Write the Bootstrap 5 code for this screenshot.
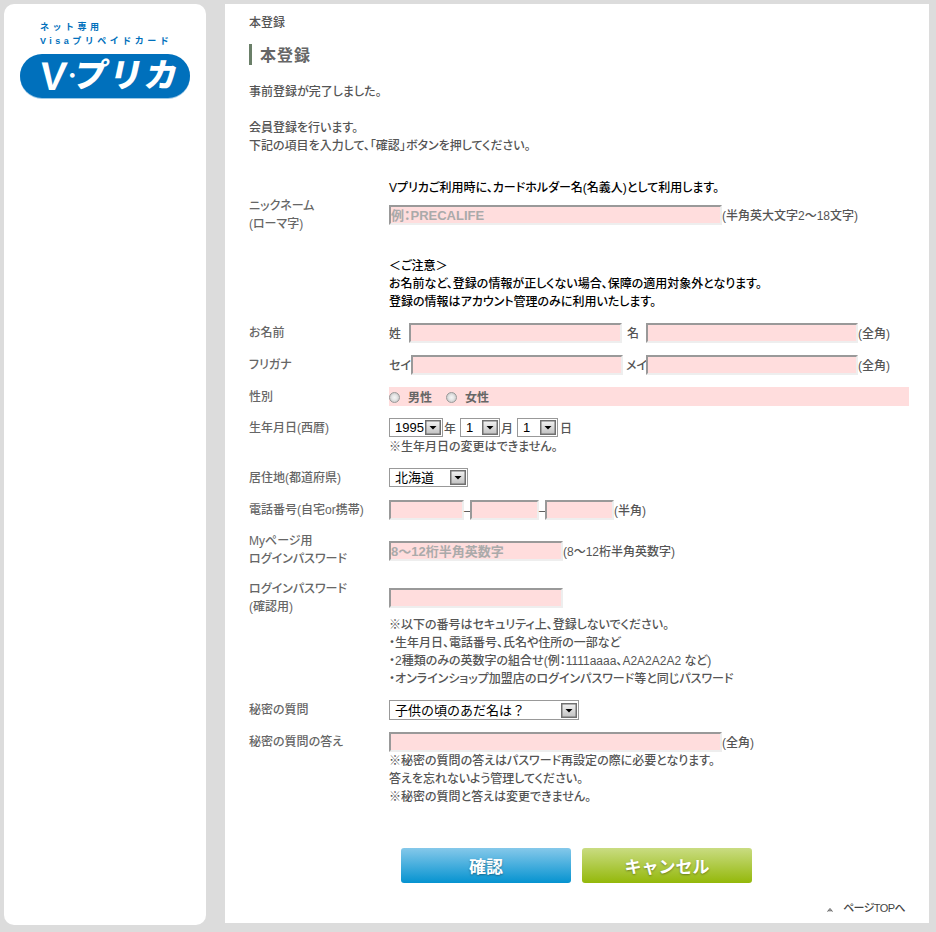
<!DOCTYPE html>
<html lang="ja">
<head>
<meta charset="utf-8">
<title>本登録</title>
<link rel="stylesheet" href="https://cdn.jsdelivr.net/npm/bootstrap@5.3.0/dist/css/bootstrap.min.css">
<style>
html,body{height:932px;overflow:hidden}
body{background:#dcdcdc;font-family:"Liberation Sans","Noto Sans CJK JP",sans-serif;font-size:12px;line-height:18px;color:#555;font-feature-settings:"palt";font-weight:500}
.vp-page{padding:4px 0 0 4px;gap:19px}
.vp-side{width:202px;height:921px;background:#fff;border-radius:10px;flex:none}
.vp-tag{padding:16px 0 0 36px;color:#0070bc;font-weight:700;font-size:9px;line-height:14px;letter-spacing:3.5px;font-feature-settings:normal}
.vp-pill{margin:6px 0 0 16px;width:170px;height:44px;border-radius:22px;background:#0070bc;color:#fff;box-shadow:0 1px 0 #9cc8e6;padding-left:20px;overflow:hidden;font-feature-settings:normal}
.vp-pill b{display:block;font-weight:900;white-space:nowrap}
.vp-v{font-size:40px;line-height:44px;transform:skewX(-6deg)}
.vp-kana{font-size:33px;line-height:44px;letter-spacing:2.5px;transform:skewX(-12deg);margin-left:-4px}
.vp-dot{font-size:22px}
.vp-main{width:704px;height:919px;background:#fff;flex:none;padding:10px 20px 0 24px;position:relative}
.vp-crumb{line-height:18px}
.vp-h1{margin:12px 0 0 0;border-left:3px solid #6a7f68;padding-left:8px;height:21px;font-size:16px;letter-spacing:1px;line-height:24px;font-weight:700;color:#666;font-feature-settings:normal}
.vp-p{margin:18px 0 0 0}
.vp-gap{margin-top:18px}
.vp-form{margin-top:23px}
.vp-row{display:flex}
.vp-lab{width:140px;flex:none;color:#666}
.vp-ctl{flex:1 1 auto;min-width:0}
.vp-black{color:#000}
.vp-txt{padding-top:1px;margin-bottom:-1px}
.vp-field{display:flex;align-items:center;height:20px}
.vp-field span{padding-top:2px}
.vp-sp9{padding-top:9px}
.vp-sp10{padding-top:10px}
.form-control.vp-in{display:block;flex:none;height:20px;padding:0;border-radius:0;border-width:2px;border-style:solid;border-color:#999 #eee #eee #999;background:#fdd;font-size:13px;line-height:16px;box-shadow:none;font-family:"Liberation Sans","Noto Sans CJK JP",sans-serif;font-weight:700;font-feature-settings:"palt"}
.form-control.vp-in::placeholder{color:#aaa;opacity:1}
.vp-w333{width:333px}.vp-w213{width:213px}.vp-w212{width:212px}.vp-w75{width:75px}.vp-w69{width:69px}.vp-w174{width:174px}
.form-select.vp-sel{flex:none;height:19px;padding:0 0 0 5px;border-radius:0;border:1px solid #999;background-color:#fff;background-size:16px 15px;background-position:right 1px center;background-repeat:no-repeat;background-image:url("data:image/svg+xml,%3Csvg xmlns='http://www.w3.org/2000/svg' viewBox='0 0 16 15' preserveAspectRatio='none'%3E%3Cdefs%3E%3ClinearGradient id='g' x2='0' y2='1'%3E%3Cstop offset='0' stop-color='%23f0f0f0'/%3E%3Cstop offset='1' stop-color='%23c4c4c4'/%3E%3C/linearGradient%3E%3C/defs%3E%3Crect width='16' height='15' fill='%23707070'/%3E%3Crect x='1.5' y='1.5' width='13' height='12' fill='url(%23g)'/%3E%3Cpath d='M4.5 6h7L8 9.5z' fill='%23000'/%3E%3C/svg%3E");font-size:13px;line-height:17px;color:#000;box-shadow:none;font-family:"Liberation Sans","Noto Sans CJK JP",sans-serif;font-feature-settings:normal}
.vp-sel-tall.form-select{height:20px}
.vp-band{background:#fdd;height:19px;width:520px;color:#666;font-weight:700;padding-top:2px}
.form-check-input.vp-radio{width:11px;height:11px;margin:0;flex:none;border:1px solid #999;background:radial-gradient(circle at 50% 50%,#f4f4f4 0,#e8e8e8 35%,#bbb 100%);box-shadow:none}
.vp-t8{margin-left:8px}
.vp-r14{margin-right:14px}
.vp-unit{width:17px;padding-left:1px}
.vp-dash{width:6px;text-align:center}
.vp-btns{margin:43px 0 0 152px;gap:11px}
.btn.vp-btn{width:170px;height:35px;padding:0;border:0;border-radius:3px;color:#fff;font-size:17px;line-height:34px;font-weight:700;text-shadow:0 1px 2px rgba(0,0,0,.35);font-family:"Noto Sans CJK JP",sans-serif;font-feature-settings:normal}
.vp-blue{background:linear-gradient(#85c8ea,#0593d0)}
.vp-green{background:linear-gradient(#c9dc82,#94b80a)}
.vp-top{position:absolute;right:24px;top:895px;gap:10px;color:#444;text-decoration:none;font-size:11px;letter-spacing:-.6px}
.vp-top svg{display:block;margin-top:3px}
</style>
</head>
<body>
<div class="d-flex vp-page">
  <aside class="vp-side">
    <div class="vp-tag">ネット専用<br>Visaプリペイドカード</div>
    <div class="vp-pill d-flex align-items-center"><b class="vp-v">V</b><b class="vp-dot">･</b><b class="vp-kana">プリカ</b></div>
  </aside>
  <main class="vp-main">
    <div class="vp-crumb">本登録</div>
    <h1 class="vp-h1">本登録</h1>
    <p class="vp-p mb-0">事前登録が完了しました。</p>
    <p class="vp-gap mb-0">会員登録を行います。<br>下記の項目を入力して、「確認」ボタンを押してください。</p>
    <form class="vp-form">
      <div class="vp-row">
        <div class="vp-lab"></div>
        <div class="vp-ctl vp-black vp-txt">Vプリカご利用時に、カードホルダー名(名義人)として利用します。</div>
      </div>
      <div class="vp-row">
        <div class="vp-lab vp-txt">ニックネーム<br>(ローマ字)</div>
        <div class="vp-ctl vp-sp9"><div class="vp-field"><input class="form-control vp-in vp-w333" placeholder="例：PRECALIFE"><span>(半角英大文字2～18文字)</span></div></div>
      </div>
      <div class="vp-row" style="margin-top:24px">
        <div class="vp-lab"></div>
        <div class="vp-ctl vp-black vp-txt">＜ご注意＞<br>お名前など、登録の情報が正しくない場合、保障の適用対象外となります。<br>登録の情報はアカウント管理のみに利用いたします。</div>
      </div>
      <div class="vp-row" style="margin-top:13px">
        <div class="vp-lab vp-txt">お名前</div>
        <div class="vp-ctl"><div class="vp-field"><span style="width:20px">姓</span><input class="form-control vp-in vp-w213"><span style="width:24px;padding-left:5px">名</span><input class="form-control vp-in vp-w212"><span>(全角)</span></div></div>
      </div>
      <div class="vp-row" style="margin-top:12px">
        <div class="vp-lab vp-txt">フリガナ</div>
        <div class="vp-ctl"><div class="vp-field"><span style="width:22px">セイ</span><input class="form-control vp-in vp-w212"><span style="width:23px;padding-left:3px;white-space:nowrap">メイ</span><input class="form-control vp-in vp-w212"><span>(全角)</span></div></div>
      </div>
      <div class="vp-row" style="margin-top:12px">
        <div class="vp-lab vp-txt">性別</div>
        <div class="vp-ctl"><div class="vp-band d-flex align-items-center"><input type="radio" class="form-check-input vp-radio" name="sx"><span class="vp-t8 vp-r14">男性</span><input type="radio" class="form-check-input vp-radio" name="sx"><span class="vp-t8">女性</span></div></div>
      </div>
      <div class="vp-row" style="margin-top:12px">
        <div class="vp-lab vp-txt">生年月日(西暦)</div>
        <div class="vp-ctl">
          <div class="vp-field" style="height:19px"><select class="form-select vp-sel" style="width:54px"><option>1995</option></select><span class="vp-unit">年</span><select class="form-select vp-sel" style="width:40px"><option>1</option></select><span class="vp-unit">月</span><select class="form-select vp-sel" style="width:41px"><option>1</option></select><span style="margin-left:2px">日</span></div>
          <div class="vp-txt">※生年月日の変更はできません。</div>
        </div>
      </div>
      <div class="vp-row" style="margin-top:13px">
        <div class="vp-lab vp-txt">居住地(都道府県)</div>
        <div class="vp-ctl"><div class="vp-field" style="height:19px"><select class="form-select vp-sel" style="width:79px"><option>北海道</option></select></div></div>
      </div>
      <div class="vp-row" style="margin-top:13px">
        <div class="vp-lab vp-txt">電話番号(自宅or携帯)</div>
        <div class="vp-ctl"><div class="vp-field"><input class="form-control vp-in vp-w75"><span class="vp-dash">–</span><input class="form-control vp-in vp-w69"><span class="vp-dash">–</span><input class="form-control vp-in vp-w69"><span>(半角)</span></div></div>
      </div>
      <div class="vp-row" style="margin-top:11px">
        <div class="vp-lab vp-txt">Myページ用<br>ログインパスワード</div>
        <div class="vp-ctl vp-sp10"><div class="vp-field"><input class="form-control vp-in vp-w174" placeholder="8～12桁半角英数字"><span>(8～12桁半角英数字)</span></div></div>
      </div>
      <div class="vp-row" style="margin-top:12px">
        <div class="vp-lab vp-txt">ログインパスワード<br>(確認用)</div>
        <div class="vp-ctl vp-sp9"><div class="vp-field"><input class="form-control vp-in vp-w174" type="password"></div>
          <div class="vp-txt" style="margin-top:7px">※以下の番号はセキュリティ上、登録しないでください。<br>・生年月日、電話番号、氏名や住所の一部など<br>・2種類のみの英数字の組合せ(例：1111aaaa、A2A2A2A2 など)<br>・オンラインショップ加盟店のログインパスワード等と同じパスワード</div>
        </div>
      </div>
      <div class="vp-row" style="margin-top:13px">
        <div class="vp-lab vp-txt">秘密の質問</div>
        <div class="vp-ctl"><div class="vp-field"><select class="form-select vp-sel vp-sel-tall" style="width:190px"><option>子供の頃のあだ名は？</option></select></div></div>
      </div>
      <div class="vp-row" style="margin-top:12px">
        <div class="vp-lab vp-txt">秘密の質問の答え</div>
        <div class="vp-ctl"><div class="vp-field"><input class="form-control vp-in vp-w333"><span>(全角)</span></div>
          <div class="vp-txt" style="margin-top:-1px">※秘密の質問の答えはパスワード再設定の際に必要となります。<br>答えを忘れないよう管理してください。<br>※秘密の質問と答えは変更できません。</div>
        </div>
      </div>
      <div class="d-flex vp-btns">
        <button type="button" class="btn vp-btn vp-blue">確認</button>
        <button type="button" class="btn vp-btn vp-green">キャンセル</button>
      </div>
    </form>
    <a href="#" class="vp-top d-flex align-items-center"><svg width="6" height="5" viewBox="0 0 6 5"><path d="M0.5 4.5l2.5-3 2.5 3M2 4.5l1-1.3 1 1.3" fill="none" stroke="#555" stroke-width="1"/></svg>ページTOPへ</a>
  </main>
</div>
<script src="https://cdn.jsdelivr.net/npm/bootstrap@5.3.0/dist/js/bootstrap.bundle.min.js"></script>
</body>
</html>
